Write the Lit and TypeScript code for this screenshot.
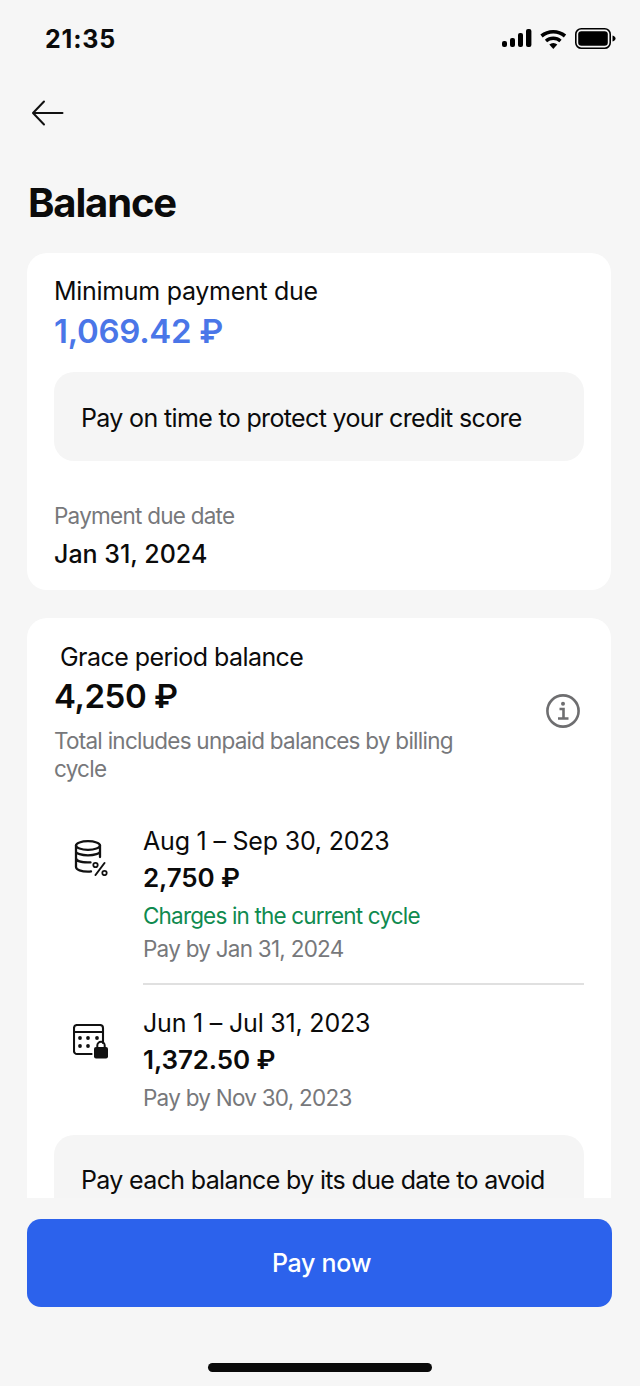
import { LitElement, html, css } from "lit";
import { customElement } from "lit/decorators.js";

@customElement("app-root")
export class AppRoot extends LitElement {
  static styles = css`
    :host { display: flex; flex-direction: column; width: 640px; height: 1386px; background: #f6f6f6; font-family: Inter, "Noto Sans", sans-serif; color: #0b0b0b; overflow: hidden; letter-spacing: -0.3px; }
    * { box-sizing: border-box; }
    .status { height: 78px; flex: none; display: flex; justify-content: space-between; align-items: flex-start; padding: 24px 24px 0 45px; }
    .time { font-size: 25px; line-height: 30px; font-weight: 700; letter-spacing: 0.8px; }
    .sys { display: flex; align-items: center; margin-top: 4px; }
    .nav { height: 70px; flex: none; display: flex; align-items: center; padding-left: 30px; }
    h1 { margin: 0; flex: none; height: 105px; padding: 32px 0 0 28px; font-size: 40px; line-height: 46px; font-weight: 700; letter-spacing: -1.15px; }
    .scroll { flex: none; height: 945px; overflow: hidden; padding: 0 29px 0 27px; display: flex; flex-direction: column; gap: 28px; }
    .card { background: #fff; border-radius: 20px; padding: 22px 27px 0; flex: none; }
    .c1 { height: 337px; }
    .label { font-size: 25px; line-height: 32px; }
    .amt-blue { font-size: 33px; line-height: 42px; margin-top: 3px; font-weight: 600; color: #4a76e8; letter-spacing: -0.3px; }
    .note { background: #f5f5f5; border-radius: 20px; padding: 29px 27px 25px; font-size: 25px; line-height: 35px; letter-spacing: -0.65px; }
    .c1 .note { margin-top: 20px; height: 89px; }
    .muted { color: #77787b; font-size: 22.5px; line-height: 28px; letter-spacing: -0.75px; }
    .due { margin-top: 41px; }
    .date { font-size: 25px; line-height: 32px; font-weight: 500; margin-top: 8px; letter-spacing: 0; }
    .c2 .head { position: relative; margin-top: 1px; }
    .gp { padding-left: 6px; letter-spacing: -0.55px; }
    .big { font-size: 33px; line-height: 42px; font-weight: 600; letter-spacing: -0.45px; margin-top: 2px; }
    .desc { width: 420px; margin-top: 10px; }
    .info { position: absolute; right: 4px; top: 53px; }
    .row { display: grid; grid-template-columns: 89px 1fr; }
    .r1 { margin-top: 42px; }
    .r1 .body { padding-bottom: 18px; border-bottom: 2px solid #e0e0e0; }
    .r2 { margin-top: 22px; }
    .r1 .ic { padding: 15px 0 0 20px; }
    .r2 .ic { padding: 17px 0 0 19px; }
    .period { font-size: 25px; line-height: 32px; letter-spacing: -0.2px; }
    .sum { font-size: 26px; line-height: 41px; font-weight: 600; letter-spacing: -0.1px; }
    .green { color: #0f8a4f; font-size: 22.5px; line-height: 36px; letter-spacing: -0.83px; }
    .row .muted { line-height: 32px; }
    .r1 .muted { margin-top: -1px; }
    .r2 .muted { margin-top: 2px; }
    .c2 .note { margin-top: 21px; padding-top: 28px; }
    .footer { flex: none; padding: 21px 28px 0 27px; height: 188px; position: relative; background: #f6f6f6; }
    .btn { height: 88px; background: #2c62ec; border-radius: 14px; color: #fff; font-size: 25px; display: flex; align-items: center; justify-content: center; font-weight: 500; padding-left: 4px; }
    .home { position: absolute; left: 208px; bottom: 14px; width: 224px; height: 9px; border-radius: 5px; background: #0a0a0a; }
  `;

  render() {
    return html`
      <div class="status">
        <div class="time">21:35</div>
        <div class="sys">
          <svg width="114" height="22" viewBox="0 0 114 22" fill="#000">
            <rect x="0" y="13" width="5" height="6" rx="2"/><rect x="8" y="10" width="5" height="9" rx="2"/><rect x="16" y="5" width="5" height="14" rx="2"/><rect x="24" y="1" width="5.400" height="18" rx="2"/>
            <path d="M39.500 8a18.500 18.500 0 0 1 23.500 0" fill="none" stroke="#000" stroke-width="3.600"/>
            <path d="M44 13a11 11 0 0 1 14.500 0" fill="none" stroke="#000" stroke-width="3.400"/>
            <path d="M47.300 16.500a6 6 0 0 1 8 0L51.300 21z"/>
            <rect x="73.800" y=".8" width="34.400" height="19.400" rx="5.500" fill="none" stroke="#000" stroke-width="1.600"/>
            <rect x="76.200" y="3.200" width="29.600" height="14.600" rx="3.200"/>
            <path d="M110.500 7.500c2 .4 3 1.700 3 3s-1 2.600-3 3z"/>
          </svg>
        </div>
      </div>
      <div class="nav">
        <svg width="36" height="30" viewBox="0 0 36 30" fill="none" stroke="#111" stroke-width="2" stroke-linecap="round" stroke-linejoin="round">
          <path d="M32.500 15H3.500M14 3.500 3 15l11 11.500"/>
        </svg>
      </div>
      <h1>Balance</h1>
      <div class="scroll">
        <section class="card c1">
          <div class="label">Minimum payment due</div>
          <div class="amt-blue">1,069.42 ₽</div>
          <div class="note">Pay on time to protect your credit score</div>
          <div class="muted due">Payment due date</div>
          <div class="date">Jan 31, 2024</div>
        </section>
        <section class="card c2">
          <div class="head">
            <div class="label gp">Grace period balance</div>
            <div class="big">4,250 ₽</div>
            <div class="muted desc">Total includes unpaid balances by billing cycle</div>
            <svg class="info" width="34" height="34" viewBox="0 0 34 34" fill="none" stroke="#6e6e70" stroke-width="2.600">
              <circle cx="17" cy="17" r="15.600"/>
              <circle cx="17" cy="9.800" r="2" fill="#6e6e70" stroke="none"/>
              <path d="M13.500 15H17.500V24M12 24.500H22.500"/>
            </svg>
          </div>
          <div class="row r1">
            <div class="ic">
              <svg width="34" height="36" viewBox="0 0 34 36" fill="none" stroke="#111" stroke-width="2.300" stroke-linecap="round">
                <ellipse cx="14" cy="5.500" rx="12" ry="4.300"/>
                <path d="M2 5.500V27c0 2.800 5.500 4.600 12 4.600 1.200 0 1.800 0 3-.2M26 5.500V17M2 8.500v3c0 2 5.500 3.800 12 3.800s12-1.800 12-3.800M2 18c0 2.800 5.500 4.400 12 4.400 1 0 1.600 0 2.500-.1"/>
                <path d="M21.500 35 30.500 23" stroke-width="2"/>
                <circle cx="21.500" cy="25" r="2.200" stroke-width="1.800"/>
                <circle cx="30.500" cy="33" r="2.200" stroke-width="1.800"/>
              </svg>
            </div>
            <div class="body">
              <div class="period">Aug 1 – Sep 30, 2023</div>
              <div class="sum">2,750 ₽</div>
              <div class="green">Charges in the current cycle</div>
              <div class="muted">Pay by Jan 31, 2024</div>
            </div>
          </div>
          <div class="row r2">
            <div class="ic">
              <svg width="36" height="36" viewBox="0 0 36 36">
                <path d="M19 30H4a3 3 0 0 1-3-3V4a3 3 0 0 1 3-3h23a3 3 0 0 1 3 3v15M1 8h29" fill="none" stroke="#111" stroke-width="2.100" stroke-linecap="round"/>
                <g fill="#111"><circle cx="7" cy="14" r="1.900"/><circle cx="15" cy="14" r="1.900"/><circle cx="24" cy="14" r="1.900"/><circle cx="7" cy="22" r="1.900"/><circle cx="15" cy="22" r="1.900"/></g>
                <rect x="19.500" y="21.500" width="17" height="14.500" fill="#fff"/>
                <rect x="21" y="23" width="14" height="11.500" rx="2" fill="#111"/>
                <path d="M24.300 24v-2.500a3.700 3.700 0 0 1 7.400 0V24" fill="none" stroke="#111" stroke-width="2"/>
              </svg>
            </div>
            <div>
              <div class="period">Jun 1 – Jul 31, 2023</div>
              <div class="sum">1,372.50 ₽</div>
              <div class="muted">Pay by Nov 30, 2023</div>
            </div>
          </div>
          <div class="note">Pay each balance by its due date to avoid</div>
        </section>
      </div>
      <div class="footer">
        <div class="btn">Pay now</div>
        <div class="home"></div>
      </div>
    `;
  }
}
